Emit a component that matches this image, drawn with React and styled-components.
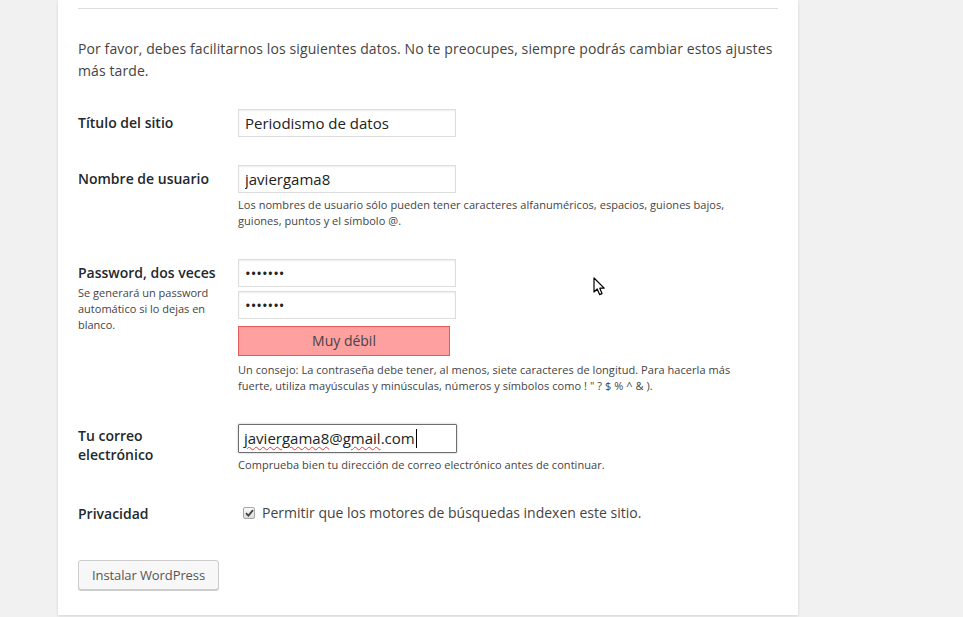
import React from 'react';
import styled, { createGlobalStyle } from 'styled-components';

const GlobalStyle = createGlobalStyle`
  html, body {
    margin: 0;
    padding: 0;
    background: #f1f1f1;
    font-family: "Open Sans", "Liberation Sans", sans-serif;
    color: #444;
  }
`;

export default function App() {
  return (
    <>
      <GlobalStyle />
      <Page>
        <Card>
          <Rule />
          <Intro>
            Por favor, debes facilitarnos los siguientes datos. No te preocupes, siempre podrás cambiar estos ajustes
            <br />
            más tarde.
          </Intro>

          <Form>
            <Row>
              <Label>Título del sitio</Label>
              <Field>
                <Input defaultValue="Periodismo de datos" />
              </Field>
            </Row>

            <Row>
              <Label>Nombre de usuario</Label>
              <Field>
                <Input defaultValue="javiergama8" />
                <Hint>
                  Los nombres de usuario sólo pueden tener caracteres alfanuméricos, espacios, guiones bajos,
                  <br />
                  guiones, puntos y el símbolo @.
                </Hint>
              </Field>
            </Row>

            <Row>
              <Label>
                Password, dos veces
                <SubLabel>Se generará un password automático si lo dejas en blanco.</SubLabel>
              </Label>
              <Field>
                <Input type="password" defaultValue="1234567" />
                <Input type="password" defaultValue="1234567" />
                <Strength>Muy débil</Strength>
                <Hint>
                  Un consejo: La contraseña debe tener, al menos, siete caracteres de longitud. Para hacerla más
                  <br />
                  fuerte, utiliza mayúsculas y minúsculas, números y símbolos como ! " ? $ % ^ &amp; ).
                </Hint>
              </Field>
            </Row>

            <Row>
              <Label lift>
                Tu correo
                <br />
                electrónico
              </Label>
              <Field>
                <FocusBox>
                  <Misspelt>javiergama8</Misspelt>@<Misspelt>gmail</Misspelt>.com
                  <Caret />
                </FocusBox>
                <Hint>Comprueba bien tu dirección de correo electrónico antes de continuar.</Hint>
              </Field>
            </Row>

            <Row compact>
              <Label>Privacidad</Label>
              <Field>
                <CheckLine>
                  <Box>
                    <svg width="9" height="8" viewBox="0 0 9 8">
                      <path d="M1 4.2 L3.4 6.6 L8 1.2" fill="none" stroke="#444" strokeWidth="1.8" />
                    </svg>
                  </Box>
                  Permitir que los motores de búsquedas indexen este sitio.
                </CheckLine>
              </Field>
            </Row>
          </Form>

          <Submit>Instalar WordPress</Submit>
        </Card>
        <Pointer width="13" height="20" viewBox="0 0 13 20">
          <path
            d="M1 1 L1 15 L4.2 12 L6.6 17.6 L9 16.6 L6.8 11.2 L11.2 11.2 Z"
            fill="#fff"
            stroke="#000"
            strokeWidth="1.2"
            strokeLinejoin="round"
          />
        </Pointer>
      </Page>
    </>
  );
}

const Page = styled.div`
  position: relative;
  min-height: 617px;
`;

const Card = styled.div`
  margin-left: 58px;
  width: 700px;
  padding: 8px 20px 25px;
  background: #fff;
  box-shadow: 0 1px 3px rgba(0, 0, 0, 0.13);
`;

const Rule = styled.div`
  height: 1px;
  background: #dedede;
`;

const Intro = styled.p`
  margin: 29px 0 14px;
  font-size: 14px;
  line-height: 22px;
  letter-spacing: 0.1px;
  white-space: nowrap;
  color: #444;
`;

const Form = styled.div`
  display: flex;
  flex-direction: column;
`;

const Row = styled.div`
  display: grid;
  grid-template-columns: 160px 1fr;
  padding: ${p => (p.compact ? '10px 0 15px' : '13px 0 15px')};
`;

const Label = styled.div`
  padding-top: ${p => (p.lift ? '2px' : '4px')};
  font-size: 14px;
  font-weight: 600;
  line-height: 19px;
  color: #23282d;
`;

const SubLabel = styled.div`
  margin-top: 3px;
  width: 140px;
  font-size: 11px;
  font-weight: 400;
  line-height: 16px;
  color: #444;
`;

const Field = styled.div`
  display: flex;
  flex-direction: column;
  align-items: flex-start;
  gap: 4px;
`;

const Input = styled.input`
  box-sizing: border-box;
  width: 218px;
  height: 28px;
  margin: 0;
  padding: 2px 6px;
  border: 1px solid #ddd;
  box-shadow: inset 0 1px 2px rgba(0, 0, 0, 0.07);
  font-family: "Open Sans", "Liberation Sans", sans-serif;
  font-size: 15px;
  color: #222;
  outline: none;
`;

const FocusBox = styled.div`
  position: relative;
  box-sizing: border-box;
  width: 219px;
  height: 29px;
  padding: 2px 5px;
  border: 1px solid #6f6f6f;
  border-radius: 1px;
  box-shadow: 0 0 2px rgba(0, 0, 0, 0.35);
  font-size: 15px;
  line-height: 23px;
  color: #222;
  white-space: nowrap;
`;

const Misspelt = styled.span`
  text-decoration: underline wavy #e33;
  text-decoration-thickness: 1px;
  text-underline-offset: 2px;
`;

const Caret = styled.span`
  display: inline-block;
  width: 1px;
  height: 19px;
  margin-left: 1px;
  vertical-align: -4px;
  background: #000;
`;

const Strength = styled.div`
  box-sizing: border-box;
  width: 212px;
  height: 30px;
  margin: 3px 0 2px;
  border: 1px solid #e35b5b;
  background: #ffa0a0;
  font-size: 14px;
  line-height: 28px;
  text-align: center;
  color: #444;
`;

const Hint = styled.p`
  margin: 0 0 2px;
  font-size: 11px;
  line-height: 16px;
  color: #444;
  letter-spacing: 0.05px;
  white-space: nowrap;
`;

const CheckLine = styled.label`
  display: flex;
  align-items: center;
  gap: 7px;
  margin-left: 5px;
  padding-top: 3px;
  font-size: 14px;
  line-height: 19px;
  color: #444;
`;

const Box = styled.span`
  display: inline-flex;
  align-items: center;
  justify-content: center;
  box-sizing: border-box;
  width: 12px;
  height: 12px;
  border: 1px solid #a6a6a6;
  border-radius: 2px;
  background: linear-gradient(#fafafa, #dcdcdc);
`;

const Submit = styled.button`
  margin-top: 22px;
  width: 141px;
  height: 30px;
  padding: 0 10px;
  border: 1px solid #ccc;
  border-radius: 3px;
  background: #f7f7f7;
  box-shadow: 0 1px 0 #ccc;
  font-family: "Open Sans", "Liberation Sans", sans-serif;
  font-size: 13px;
  letter-spacing: -0.1px;
  color: #555;
  cursor: pointer;
`;

const Pointer = styled.svg`
  position: absolute;
  left: 593px;
  top: 277px;
`;
